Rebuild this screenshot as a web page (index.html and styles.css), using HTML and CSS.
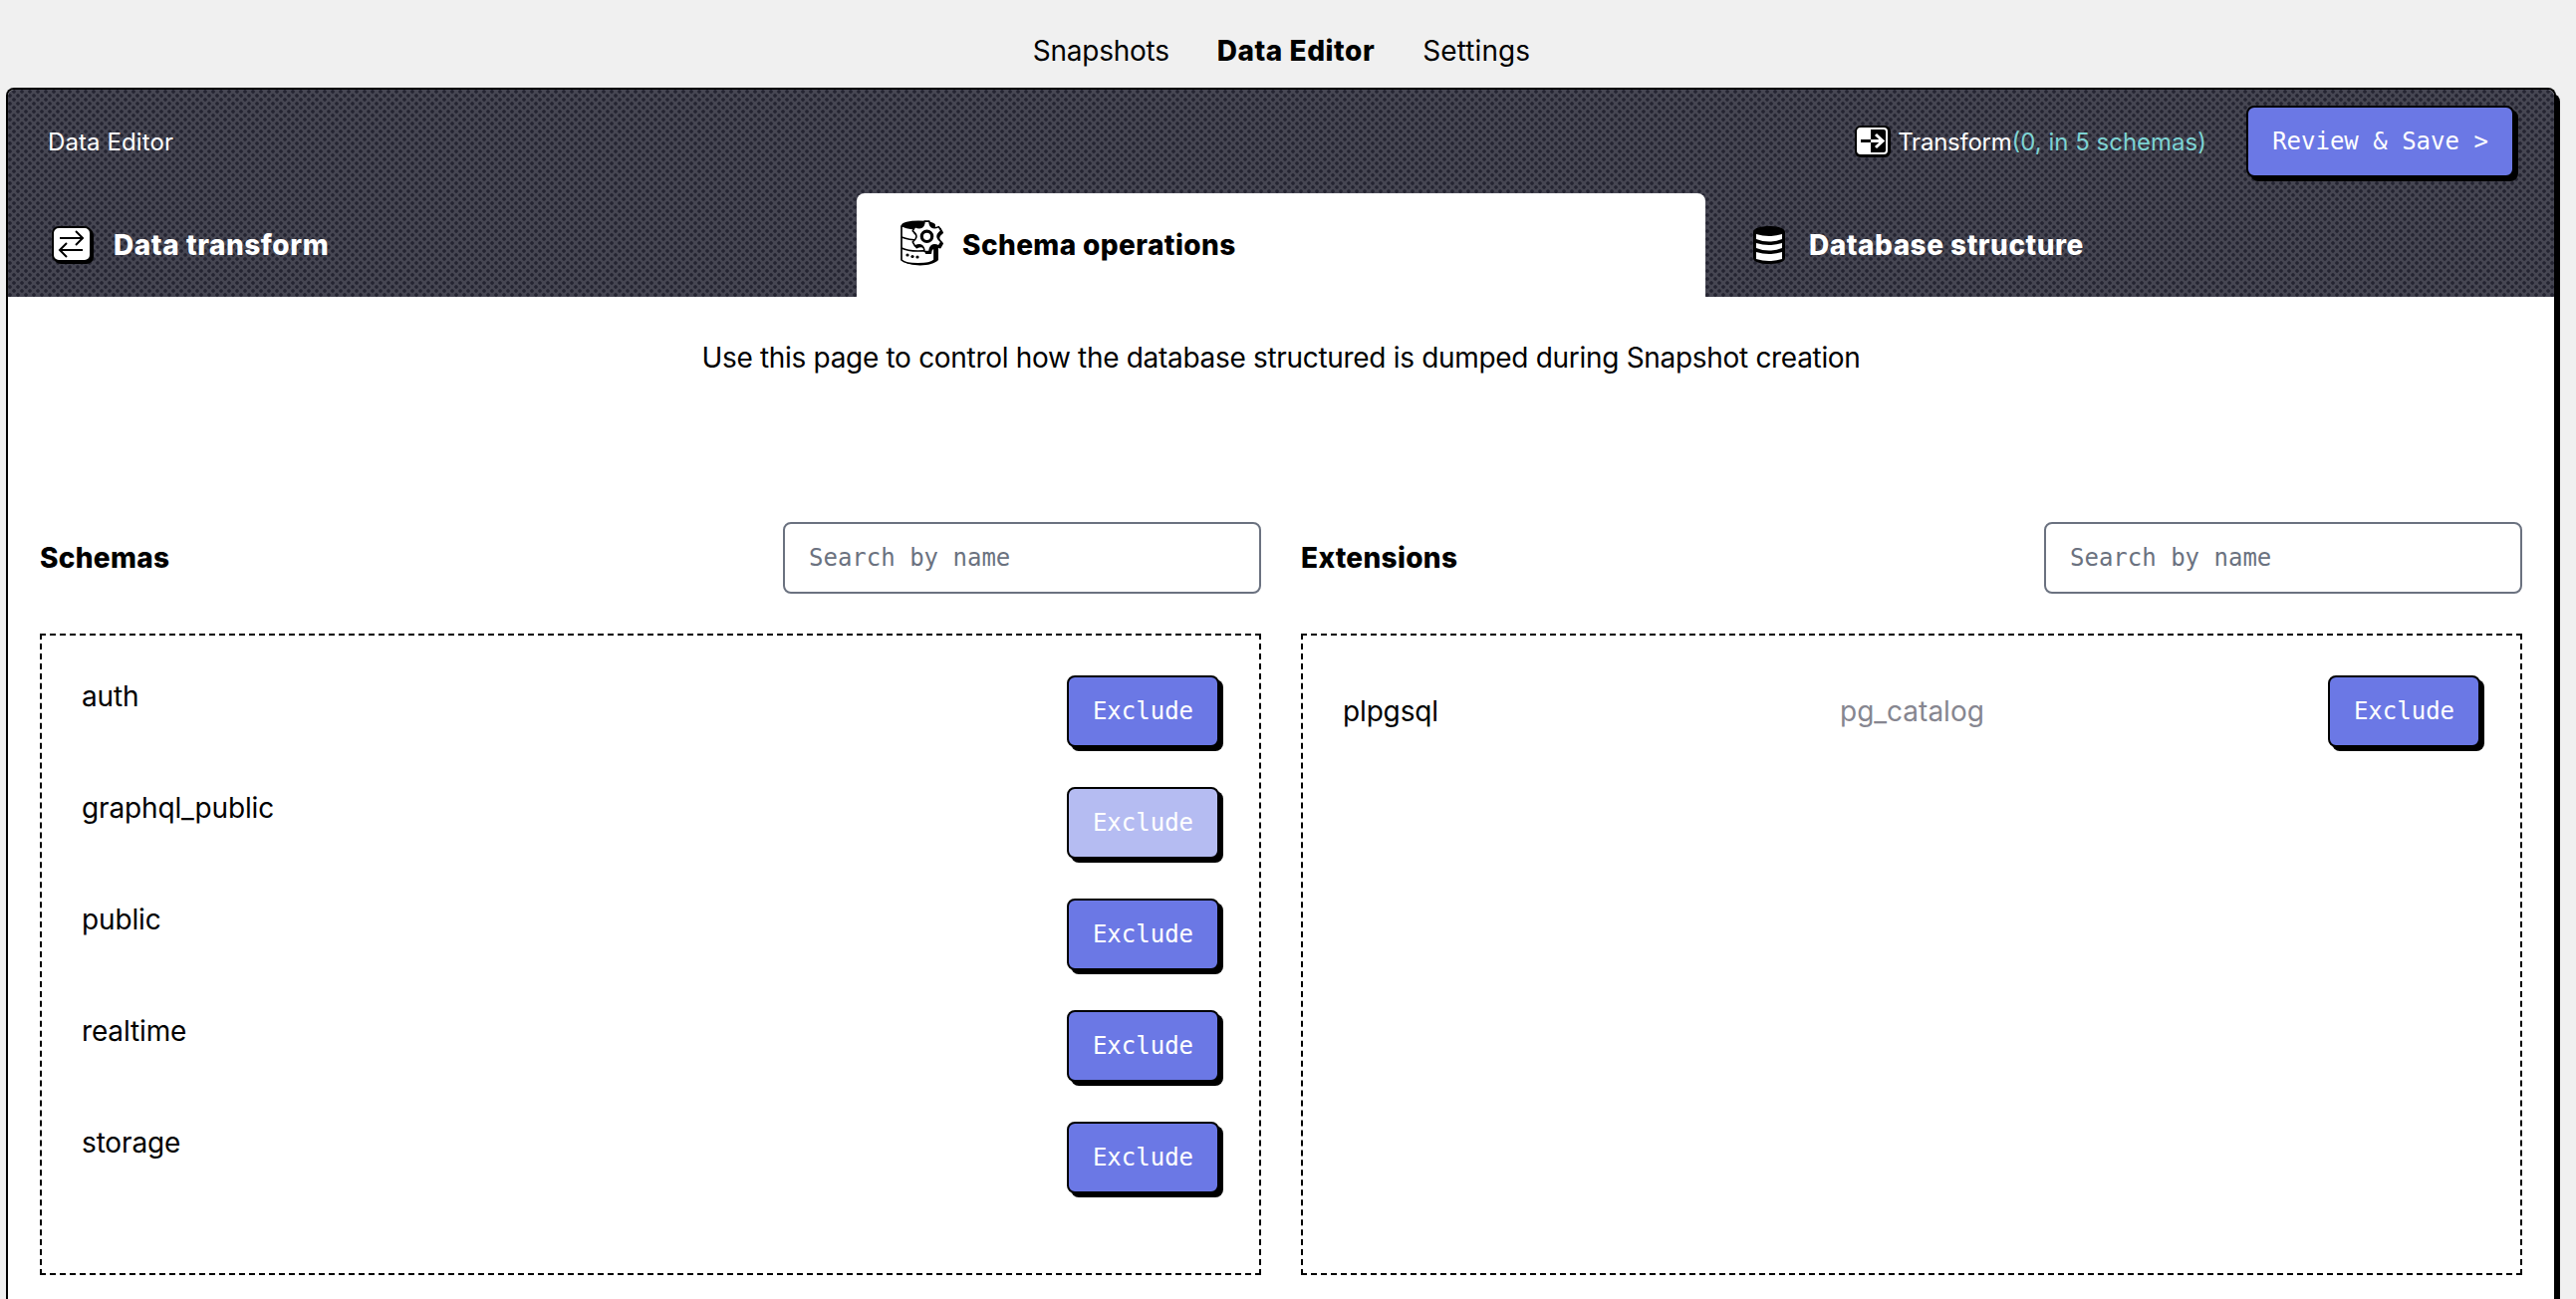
FILE: index.html
```html
<!DOCTYPE html>
<html lang="en">
<head>
<meta charset="utf-8">
<title>Data Editor</title>
<link rel="stylesheet" href="styles.css">
</head>
<body>
<nav class="nav"><a>Snapshots</a><a class="active">Data Editor</a><a class="settings">Settings</a></nav>
<main class="window">
  <header class="header">
    <div class="topbar">
      <span class="title">Data Editor</span>
      <div class="status">
        <svg class="status-icon" width="36" height="32" viewBox="0 0 36 32"><rect width="36" height="32" rx="6"/><rect x="2" y="2" width="31" height="27" rx="4" fill="#fff"/><path d="M16 4h13q2 0 2 2v19q0 2-2 2H16z"/><path d="M6 15.500h10" stroke="#000" stroke-width="3"/><path d="M16 15.500h12M21 9l7 6.500-7 6.500" fill="none" stroke="#fff" stroke-width="3"/></svg>
        <span class="status-name">Transform</span><span class="status-count">(0, in 5 schemas)</span>
      </div>
      <button class="button save">Review &amp; Save &gt;</button>
    </div>
    <div class="tabs">
      <div class="tab"><svg width="42" height="38" viewBox="0 0 42 38"><rect x="2" y="2" width="40" height="36" rx="7"/><rect x="1" y="1" width="38" height="34" rx="6" fill="#fff" stroke="#000" stroke-width="2"/><path d="M8 12h23M24 5l7 7-7 7M31 24H8M15 17l-7 7 7 7" fill="none" stroke="#000" stroke-width="2"/></svg><span>Data transform</span></div>
      <div class="tab selected"><svg class="gear" width="44" height="46" viewBox="0 0 44 46"><path d="M3 8v33c6 6 29 6 35-1V20z"/><path d="M1 6v34c5 5 28 5 33 0V6z" fill="#fff" stroke="#000" stroke-width="1.700"/><ellipse cx="18" cy="5" rx="17" ry="4.500"/><path d="M1 17c5 2 11 3 17 3M1 28c8 4 25 4 33 0" fill="none" stroke="#000" stroke-width="1.700"/><circle cx="7" cy="35" r="1.600"/><circle cx="12" cy="36.500" r="1.600"/><circle cx="17" cy="37" r="1.600"/><g stroke="#000" stroke-width="1.600" stroke-linejoin="round"><path d="M-2.500-15.800H2.500Q3.500-6 12.400-10.100L14.900-5.700Q7 0 14.900 5.700L12.400 10.100Q3.500 6 2.500 15.800H-2.500Q-3.500 6-12.400 10.100L-14.900 5.700Q-7 0-14.900-5.700L-12.400-10.100Q-3.500-6-2.500-15.800Z" transform="translate(28 18) scale(.96)"/><path d="M-2.500-15.800H2.500Q3.500-6 12.400-10.100L14.900-5.700Q7 0 14.900 5.700L12.400 10.100Q3.500 6 2.500 15.800H-2.500Q-3.500 6-12.400 10.100L-14.900 5.700Q-7 0-14.900-5.700L-12.400-10.100Q-3.500-6-2.500-15.800Z" fill="#fff" transform="translate(26.500 16.300) scale(.96)"/></g><circle cx="26.500" cy="16.300" r="5.200" fill="#fff" stroke="#000" stroke-width="3.200"/></svg><span>Schema operations</span></div>
      <div class="tab database"><svg width="32" height="38" viewBox="0 0 32 38"><path d="M0 6C0-2 32-2 32 6v26c0 8-32 8-32 0z"/><path d="M3 8q13 4 26 0v5q-13 5-26 0zM3 17q13 4 26 0v5q-13 5-26 0zM3 26q13 4 26 0v7q-13 4-26 0z" fill="#fff"/></svg><span>Database structure</span></div>
    </div>
  </header>
  <p class="intro">Use this page to control how the database structured is dumped during Snapshot creation</p>
  <div class="panels">
    <section class="panel">
      <div class="panel-head"><h2>Schemas</h2><input class="search" placeholder="Search by name"></div>
      <div class="list">
        <div class="row"><span>auth</span><button class="button">Exclude</button></div>
        <div class="row"><span>graphql_public</span><button class="button disabled">Exclude</button></div>
        <div class="row"><span>public</span><button class="button">Exclude</button></div>
        <div class="row"><span>realtime</span><button class="button">Exclude</button></div>
        <div class="row"><span>storage</span><button class="button">Exclude</button></div>
      </div>
    </section>
    <section class="panel">
      <div class="panel-head"><h2>Extensions</h2><input class="search" placeholder="Search by name"></div>
      <div class="list">
        <div class="row centered"><span class="ext">plpgsql</span><span class="catalog">pg_catalog</span><button class="button">Exclude</button></div>
      </div>
    </section>
  </div>
</main>
</body>
</html>
```
FILE: styles.css
```css
* { box-sizing: border-box; }
body { margin: 0; height: 1304px; overflow: hidden; background: #f0f0f0; color: #000; font: 28px/40px Inter, sans-serif; }
.nav { height: 88px; padding: 31px 13px 0 0; display: flex; justify-content: center; gap: 48px; letter-spacing: -.25px; }
.active { font-weight: 800; letter-spacing: .55px; }
.settings { letter-spacing: .1px; }
.window { margin-left: 6px; width: 2560px; height: 1216px; background: #fff; border: 2px solid #000; border-bottom: 0; border-radius: 8px 8px 0 0; box-shadow: 4px 6px 0 #000; }
.header { height: 208px; border-radius: 6px 6px 0 0; background: radial-gradient(circle, #242431 1.4px, transparent 2.2px) -2px 2px / 8px 8px, radial-gradient(circle, #242431 1.4px, transparent 2.2px) 2px -2px / 8px 8px, #464652; color: #fff; }
.topbar { height: 104px; padding: 0 40px; display: flex; align-items: center; }
.title { font-size: 24px; flex: 1; padding-top: 2px; letter-spacing: .1px; }
.status { display: flex; align-items: center; font-size: 24px; margin-right: 40px; }
.status-icon { margin-right: 7px; }
.status-name { padding-top: 2px; letter-spacing: -.25px; }
.status-count { padding-top: 2px; color: #7dd3d3; }
.tabs { display: grid; grid-template-columns: repeat(3, 1fr); height: 104px; }
.tab { display: flex; align-items: center; font-weight: 800; padding-left: 44px; gap: 20px; letter-spacing: .55px; }
.selected { background: #fff; color: #000; border-radius: 8px 8px 0 0; gap: 18px; letter-spacing: .4px; }
.gear { margin-top: -4px; }
.database { padding-left: 48px; gap: 24px; letter-spacing: .5px; }
.button { font: 24px/32px "DejaVu Sans Mono", monospace; width: 153px; height: 72px; padding: 0; color: #fff; background: #6b78e5; border: 2px solid #000; border-radius: 8px; box-shadow: 4px 4px 0 #000; }
.save { width: 269px; }
.disabled { background: #b5bcf2; }
.intro { margin: 0; padding-top: 41px; height: 226px; text-align: center; letter-spacing: -.31px; }
.panels { display: grid; grid-template-columns: 1fr 1fr; gap: 40px; padding: 0 32px; }
.panel-head { display: flex; align-items: center; justify-content: space-between; height: 72px; margin-bottom: 40px; }
h2 { margin: 0; font-size: 28px; font-weight: 800; letter-spacing: .3px; }
.search { width: 480px; height: 72px; border: 2px solid #6b7280; border-radius: 8px; padding: 0 24px; background: #fff; font: 24px "DejaVu Sans Mono", monospace; }
.search::placeholder { color: #6b7280; opacity: 1; }
.list { height: 644px; border: 2px dashed #000; padding: 40px; display: flex; flex-direction: column; gap: 40px; }
.row { display: flex; height: 72px; justify-content: space-between; letter-spacing: -.15px; }
.row span { padding-top: 1px; }
.centered { align-items: center; }
.row.centered span { padding-top: 0; }
.ext { width: 499px; }
.catalog { flex: 1; color: #868690; letter-spacing: 0; }
```
